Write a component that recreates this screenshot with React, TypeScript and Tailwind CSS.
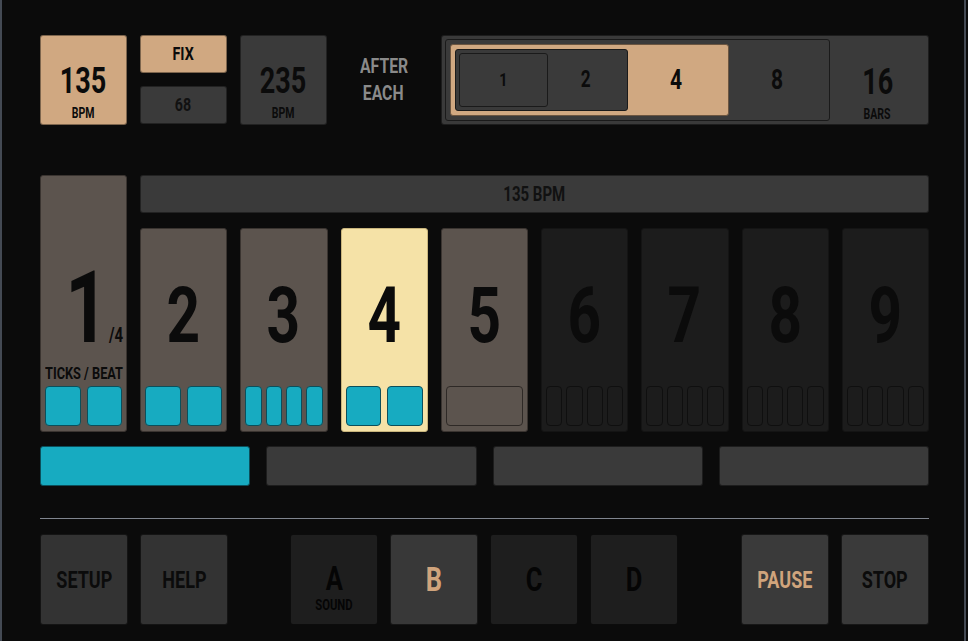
import React from 'react';

const F = "font-['Roboto','Liberation_Sans',sans-serif] font-bold";

type CellState = 'played' | 'current' | 'pending' | 'off';

const cells: { n: number; state: CellState; ticks: number; filled: boolean }[] = [
  { n: 2, state: 'played', ticks: 2, filled: true },
  { n: 3, state: 'played', ticks: 4, filled: true },
  { n: 4, state: 'current', ticks: 2, filled: true },
  { n: 5, state: 'pending', ticks: 1, filled: false },
  { n: 6, state: 'off', ticks: 4, filled: false },
  { n: 7, state: 'off', ticks: 4, filled: false },
  { n: 8, state: 'off', ticks: 4, filled: false },
  { n: 9, state: 'off', ticks: 4, filled: false },
];

const cellBg: Record<CellState, string> = {
  played: 'bg-[#5c544e] border-[#3a3430]',
  current: 'bg-[#f5e2a7] border-[#c8b47c]',
  pending: 'bg-[#5c544e] border-[#3a3430]',
  off: 'bg-[#1c1c1c] border-[#141414]',
};

// condensed look: the reference uses a narrow display face
function N({ children, className = '' }: { children: React.ReactNode; className?: string }) {
  return <span className={`inline-block whitespace-nowrap scale-x-75 ${className}`}>{children}</span>;
}

function Ticks({ count, filled, dark }: { count: number; filled: boolean; dark?: boolean }) {
  return (
    <div className={`flex h-[40px] px-[4px] mb-[5px] ${count > 2 ? 'gap-[4px]' : 'gap-[6px]'}`}>
      {[...Array(count)].map((_, i) => (
        <div
          key={i}
          className={`flex-1 rounded-[4px] border ${
            filled
              ? 'bg-[#17abc1] border-[#0b4f5b]'
              : dark
              ? 'border-[#0f0f0f]'
              : 'border-[#2e2926]'
          }`}
        />
      ))}
    </div>
  );
}

function Btn({ children, className = '' }: { children: React.ReactNode; className?: string }) {
  return (
    <div className={`w-[88px] h-[91px] rounded-[3px] border border-black/60 flex flex-col items-center justify-center ${className}`}>
      {children}
    </div>
  );
}

export default function App() {
  return (
    <div className={`w-full h-[641px] bg-[#0b0b0b] ${F}`}>
      <div className="w-[966px] h-[641px] border-x-2 border-[#444a54] pl-[38px] pr-[35px] pt-[35px]">
        {/* Top row */}
        <div className="flex gap-[13px] h-[90px]">
          <div className="w-[87px] rounded-[3px] bg-[#d0a881] border border-black/40 flex flex-col items-center pt-[27px] text-[#0b0b0b]">
            <N className="text-[36px] leading-none">135</N>
            <N className="text-[14px] leading-none mt-[7px]">BPM</N>
          </div>
          <div className="w-[87px] flex flex-col gap-[13px]">
            <div className="h-[38px] rounded-[3px] bg-[#d0a881] border border-black/40 flex items-center justify-center text-[19px] text-[#0b0b0b]">
              <N>FIX</N>
            </div>
            <div className="h-[38px] rounded-[3px] bg-[#3a3a3a] border border-black/40 flex items-center justify-center text-[19px] text-[#111]">
              <N>68</N>
            </div>
          </div>
          <div className="w-[87px] rounded-[3px] bg-[#3a3a3a] border border-black/40 flex flex-col items-center pt-[27px] text-[#0b0b0b]">
            <N className="text-[36px] leading-none">235</N>
            <N className="text-[14px] leading-none mt-[7px]">BPM</N>
          </div>
          <div className="w-[88px] flex flex-col items-center justify-center text-[21px] leading-[27px] text-[#8a8a8a]">
            <N>AFTER</N>
            <N>EACH</N>
          </div>
          {/* Bars selector */}
          <div className="w-[489px] rounded-[3px] bg-[#3a3a3a] border border-black/50 flex p-[3px] text-[#0b0b0b]">
            <div className="w-[385px] rounded-[3px] border border-[#1a1a1a] flex p-[4px]">
              <div className="w-[279px] rounded-[3px] bg-[#d0a881] border border-[#6b5540] flex p-[4px]">
                <div className="w-[173px] rounded-[3px] bg-[#3a3a3a] border border-[#1a1a1a] flex p-[3px]">
                  <div className="w-[89px] rounded-[3px] border border-[#1a1a1a] flex items-center justify-center text-[19px]">
                    <N>1</N>
                  </div>
                  <div className="flex-1 flex items-center justify-center text-[23px]">
                    <N>2</N>
                  </div>
                </div>
                <div className="flex-1 flex items-center justify-center text-[28px]">
                  <N>4</N>
                </div>
              </div>
              <div className="flex-1 flex items-center justify-center text-[28px]">
                <N>8</N>
              </div>
            </div>
            <div className="flex-1 flex flex-col items-center pt-[25px]">
              <N className="text-[36px] leading-none">16</N>
              <N className="text-[14px] leading-none mt-[7px]">BARS</N>
            </div>
          </div>
        </div>

        {/* Beat grid */}
        <div className="flex gap-[13px] mt-[50px] h-[257px]">
          <div className="w-[87px] rounded-[3px] bg-[#5c544e] border border-[#3a3430] flex flex-col text-[#0b0b0b]">
            <div className="flex justify-center items-baseline pt-[82px] pl-[12px]">
              <N className="text-[100px] leading-none origin-right">1</N>
              <N className="text-[20px] leading-none origin-left">/4</N>
            </div>
            <div className="mt-auto flex justify-center text-[17px] leading-none mb-[4px]">
              <N>TICKS / BEAT</N>
            </div>
            <Ticks count={2} filled />
          </div>
          <div className="flex-1 flex flex-col gap-[15px]">
            <div className="h-[38px] rounded-[3px] bg-[#3a3a3a] border border-black/40 flex items-center justify-center text-[20px] text-[#111]">
              <N>135 BPM</N>
            </div>
            <div className="flex-1 flex gap-[13px]">
              {cells.map((c) => (
                <div
                  key={c.n}
                  className={`flex-1 rounded-[3px] border flex flex-col text-[#0b0b0b] ${cellBg[c.state]}`}
                >
                  <div className="flex justify-center pt-[48px] text-[78px] leading-none">
                    <N>{c.n}</N>
                  </div>
                  <div className="mt-auto">
                    <Ticks count={c.ticks} filled={c.filled} dark={c.state === 'off'} />
                  </div>
                </div>
              ))}
            </div>
          </div>
        </div>

        {/* Pattern bars */}
        <div className="flex gap-[16px] mt-[14px] h-[40px]">
          <div className="flex-1 rounded-[3px] bg-[#17abc1] border border-[#0b4f5b]" />
          <div className="flex-1 rounded-[3px] bg-[#3a3a3a] border border-black/50" />
          <div className="flex-1 rounded-[3px] bg-[#3a3a3a] border border-black/50" />
          <div className="flex-1 rounded-[3px] bg-[#3a3a3a] border border-black/50" />
        </div>

        <div className="h-px bg-[#80858f] mt-[32px]" />

        {/* Bottom controls */}
        <div className="flex mt-[15px]">
          <div className="flex gap-[12px]">
            <Btn className="bg-[#333333] text-[#0b0b0b] text-[24px]"><N>SETUP</N></Btn>
            <Btn className="bg-[#333333] text-[#0b0b0b] text-[24px]"><N>HELP</N></Btn>
          </div>
          <div className="flex gap-[12px] ml-[62px]">
            <Btn className="bg-[#1e1e1e] text-[#050505] pt-[14px]">
              <N className="text-[34px] leading-none">A</N>
              <N className="text-[15px] leading-none mt-[3px]">SOUND</N>
            </Btn>
            <Btn className="bg-[#383838] text-[#d0a47c] text-[34px]"><N>B</N></Btn>
            <Btn className="bg-[#1e1e1e] text-[#050505] text-[34px]"><N>C</N></Btn>
            <Btn className="bg-[#1e1e1e] text-[#050505] text-[34px]"><N>D</N></Btn>
          </div>
          <div className="flex gap-[12px] ml-[63px]">
            <Btn className="bg-[#3a3a3a] text-[#d0a47c] text-[24px]"><N>PAUSE</N></Btn>
            <Btn className="bg-[#3a3a3a] text-[#0b0b0b] text-[24px]"><N>STOP</N></Btn>
          </div>
        </div>
      </div>
    </div>
  );
}
